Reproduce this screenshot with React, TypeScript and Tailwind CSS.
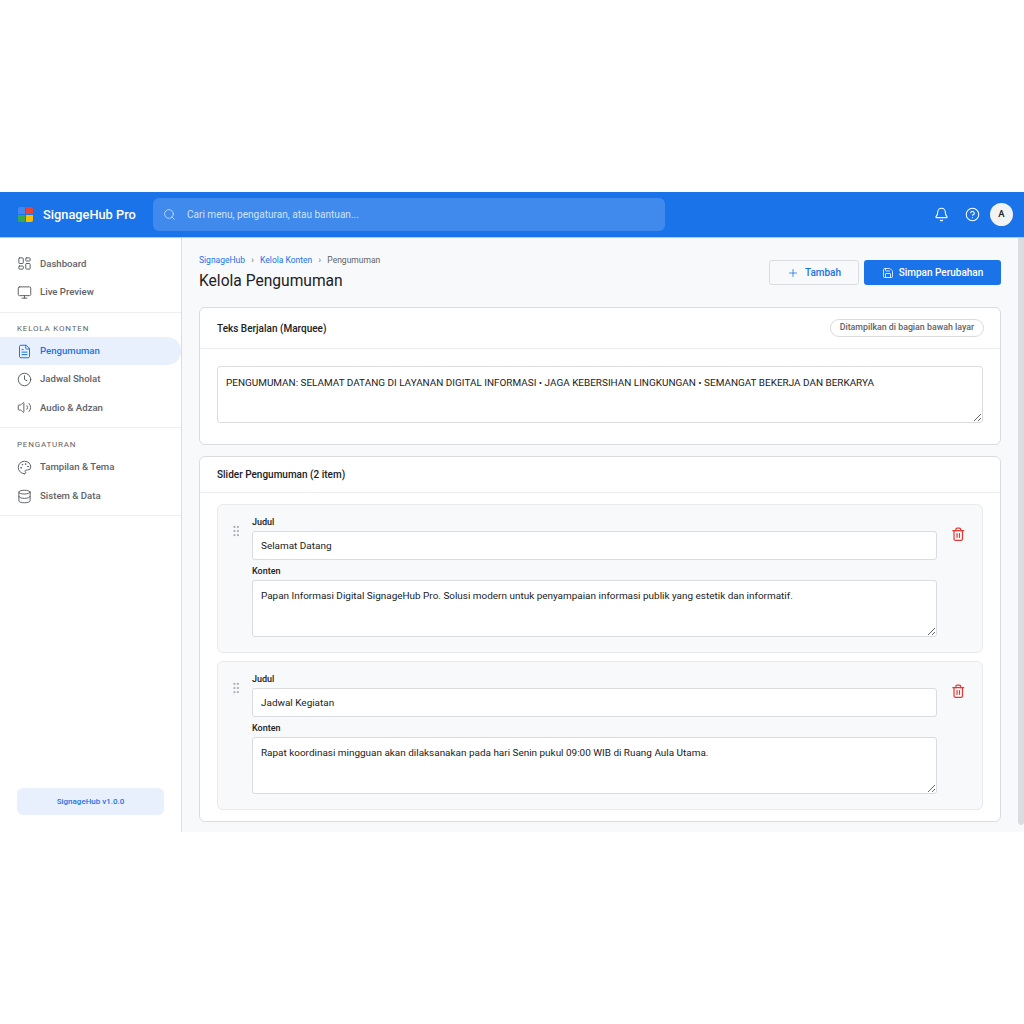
import { Bell, CircleHelp, Clock, Database, FileText, GripVertical, LayoutDashboard, Monitor, Palette, Plus, Save, Search, Trash2, Volume2 } from "lucide-react";

const navUtama = [
  { label: "Dashboard", icon: LayoutDashboard },
  { label: "Live Preview", icon: Monitor },
];

const navKonten = [
  { label: "Pengumuman", icon: FileText, active: true },
  { label: "Jadwal Sholat", icon: Clock },
  { label: "Audio & Adzan", icon: Volume2 },
];

const navPengaturan = [
  { label: "Tampilan & Tema", icon: Palette },
  { label: "Sistem & Data", icon: Database },
];

const sliderItems = [
  {
    judul: "Selamat Datang",
    konten: "Papan Informasi Digital SignageHub Pro. Solusi modern untuk penyampaian informasi publik yang estetik dan informatif.",
  },
  {
    judul: "Jadwal Kegiatan",
    konten: "Rapat koordinasi mingguan akan dilaksanakan pada hari Senin pukul 09:00 WIB di Ruang Aula Utama.",
  },
];

function Logo() {
  return (
    <div className="grid h-[15px] w-[15px] grid-cols-2 gap-px">
      <div className="rounded-tl-[2px] bg-[#4285f4]" />
      <div className="rounded-tr-[2px] bg-[#ea4335]" />
      <div className="rounded-bl-[2px] bg-[#34a853]" />
      <div className="rounded-br-[2px] bg-[#fbbc04]" />
    </div>
  );
}

function NavItem({ label, icon: Icon, active }: { label: string; icon: typeof Clock; active?: boolean }) {
  return (
    <div
      className={`flex h-[28.4px] items-center gap-[8px] rounded-r-full pl-[17px] text-[9.6px] font-medium ${
        active ? "bg-[#e8f0fe] text-[#1a73e8]" : "text-[#5f6368]"
      }`}
    >
      <Icon className="h-[15px] w-[15px]" strokeWidth={1.6} />
      <span>{label}</span>
    </div>
  );
}

function SectionLabel({ children }: { children: string }) {
  return <div className="px-[17px] text-[8px] leading-[12px] tracking-[0.8px] text-[#5f6368]">{children}</div>;
}

function Sidebar() {
  return (
    <aside className="flex w-[182px] shrink-0 flex-col border-r border-[#dadce0] bg-white">
      <div className="border-b border-[#eceef1] pt-[11.5px] pb-[5.7px]">
        {navUtama.map((n) => (
          <NavItem key={n.label} {...n} />
        ))}
      </div>
      <div className="border-b border-[#eceef1] pt-[10px] pb-[4.8px]">
        <SectionLabel>KELOLA KONTEN</SectionLabel>
        <div className="mt-[2px]">
          {navKonten.map((n) => (
            <NavItem key={n.label} {...n} />
          ))}
        </div>
      </div>
      <div className="border-b border-[#eceef1] pt-[11px] pb-[4.4px]">
        <SectionLabel>PENGATURAN</SectionLabel>
        <div className="mt-[2.5px]">
          {navPengaturan.map((n) => (
            <NavItem key={n.label} {...n} />
          ))}
        </div>
      </div>
      <div className="mt-auto px-[17px] pb-[17px]">
        <div className="flex h-[27px] items-center justify-center rounded-[6px] bg-[#e8f0fe] text-[8px] font-medium text-[#1a73e8]">
          SignageHub v1.0.0
        </div>
      </div>
    </aside>
  );
}

function SliderCard({ judul, konten }: { judul: string; konten: string }) {
  return (
    <div className="flex rounded-[6px] border border-[#e8eaed] bg-[#f8f9fa] pt-[11px] pr-[17px] pb-[15px] pl-[11px]">
      <GripVertical className="mt-[8px] h-[14px] w-[14px] shrink-0 text-[#9aa0a6]" strokeWidth={1.6} />
      <div className="ml-[9px] min-w-0 flex-1">
        <div className="mb-[3px] text-[9px] leading-[12px] font-medium text-[#202124]">Judul</div>
        <input
          readOnly
          value={judul}
          className="block h-[29px] w-full rounded-[3px] border border-[#dadce0] bg-white px-[8px] text-[9.95px] text-[#202124] outline-none"
        />
        <div className="mt-[4.5px] mb-[3.5px] text-[9px] leading-[12px] font-medium text-[#202124]">Konten</div>
        <textarea
          readOnly
          value={konten}
          className="block h-[57px] w-full rounded-[3px] border border-[#dadce0] bg-white px-[8px] py-[7px] text-[9.95px] leading-[15px] text-[#202124] outline-none"
        />
      </div>
      <div className="ml-[14px] w-[14px] shrink-0 pt-[11px]">
        <Trash2 className="h-[14.5px] w-[14.5px] text-[#e53935]" strokeWidth={2} />
      </div>
    </div>
  );
}

export default function App() {
  return (
    <div className="flex h-screen items-center bg-white font-['Roboto',sans-serif]">
      <div className="flex h-[640px] w-full flex-col bg-[#f8f9fa]">
        <header className="flex h-[46px] shrink-0 items-center border-b border-[#a8c7fa] bg-[#1a73e8] pr-[11px] pl-[18px]">
          <Logo />
          <div className="ml-[10px] w-[110px] text-[12.8px] font-medium text-white">SignageHub Pro</div>
          <div className="flex h-[33px] w-[512px] items-center gap-[11px] rounded-[6px] bg-[#3f8aec] px-[10px] text-[10.05px] text-[#d1e3fb]">
            <Search className="h-[13px] w-[13px]" strokeWidth={1.5} />
            <span>Cari menu, pengaturan, atau bantuan...</span>
          </div>
          <div className="ml-auto flex items-center">
            <Bell className="h-[15px] w-[15px] text-white" strokeWidth={1.7} />
            <CircleHelp className="ml-[16px] h-[15px] w-[15px] text-white" strokeWidth={1.7} />
            <div className="ml-[10px] flex h-[23px] w-[23px] items-center justify-center rounded-full bg-[#f1f3f4] text-[9.5px] font-medium text-[#202124]">
              A
            </div>
          </div>
        </header>

        <div className="flex min-h-0 flex-1">
          <Sidebar />
          <main className="relative min-w-0 flex-1 overflow-hidden pt-[16px] pr-[23px] pl-[17px]">
            <div className="flex items-start justify-between">
              <div>
                <div className="flex items-center gap-[6.25px] text-[8.5px] leading-[12px]">
                  <span className="text-[#1a73e8]">SignageHub</span>
                  <span className="text-[#5f6368]">›</span>
                  <span className="text-[#1a73e8]">Kelola Konten</span>
                  <span className="text-[#5f6368]">›</span>
                  <span className="text-[#5f6368]">Pengumuman</span>
                </div>
                <h1 className="mt-[5px] text-[15.6px] leading-[20px] font-normal text-[#202124]">Kelola Pengumuman</h1>
              </div>
              <div className="mt-[6px] flex gap-[5px]">
                <button className="flex h-[25px] w-[90px] items-center justify-center gap-[6px] rounded-[3px] border border-[#dadce0] text-[10px] font-medium text-[#1a73e8]">
                  <Plus className="h-[12px] w-[12px]" strokeWidth={1.6} />
                  Tambah
                </button>
                <button className="flex h-[25px] w-[137px] items-center justify-center gap-[5px] rounded-[3px] bg-[#1a73e8] text-[10px] font-medium text-white">
                  <Save className="h-[12px] w-[12px]" strokeWidth={1.6} />
                  Simpan Perubahan
                </button>
              </div>
            </div>

            <section className="mt-[16px] rounded-[6px] border border-[#dadce0] bg-white">
              <div className="flex h-[41px] items-center justify-between border-b border-[#eceef1] pr-[16px] pl-[17px]">
                <h2 className="text-[10px] font-medium text-[#202124]">Teks Berjalan (Marquee)</h2>
                <span className="flex h-[18px] items-center rounded-full border border-[#dadce0] px-[9px] text-[8.8px] font-medium text-[#5f6368]">
                  Ditampilkan di bagian bawah layar
                </span>
              </div>
              <div className="px-[17px] pt-[17px] pb-[21px]">
                <textarea
                  readOnly
                  value="PENGUMUMAN: SELAMAT DATANG DI LAYANAN DIGITAL INFORMASI • JAGA KEBERSIHAN LINGKUNGAN • SEMANGAT BEKERJA DAN BERKARYA"
                  className="block h-[57px] w-full rounded-[3px] border border-[#dadce0] bg-white px-[8px] py-[8px] text-[9.95px] leading-[15px] text-[#202124] outline-none"
                />
              </div>
            </section>

            <section className="mt-[11px] rounded-[6px] border border-[#dadce0] bg-white">
              <div className="flex h-[36px] items-center border-b border-[#eceef1] px-[17px]">
                <h2 className="text-[10px] font-medium text-[#202124]">Slider Pengumuman (2 item)</h2>
              </div>
              <div className="flex flex-col gap-[8px] px-[17px] pt-[11px] pb-[11px]">
                {sliderItems.map((s) => (
                  <SliderCard key={s.judul} {...s} />
                ))}
              </div>
            </section>

            <div className="absolute top-0 right-0 h-[587px] w-[6px] rounded-b-[3px] bg-[#dadce0]" />
          </main>
        </div>
      </div>
    </div>
  );
}
